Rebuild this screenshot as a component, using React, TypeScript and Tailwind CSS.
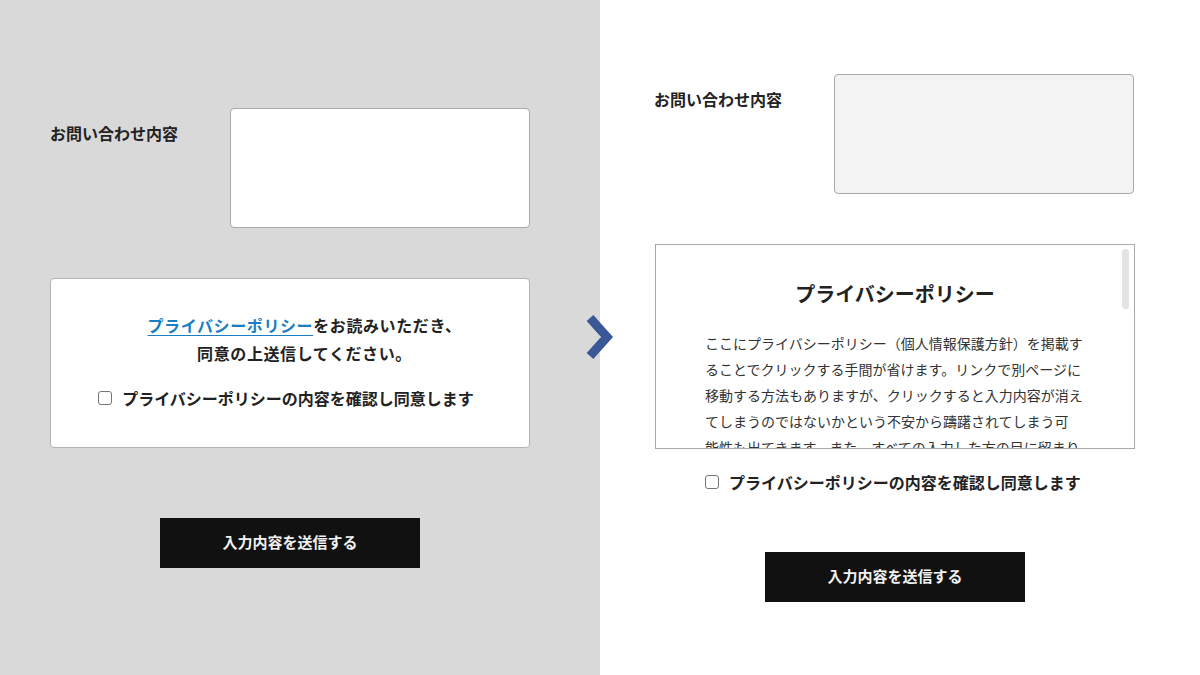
import React from "react";

const font = { fontFamily: '"Noto Sans CJK JP", "Noto Sans", sans-serif' };

// 表示される行の折り返しを参照に合わせて固定
const policyLines = [
  "ここにプライバシーポリシー（個人情報保護方針）を掲載す",
  "ることでクリックする手間が省けます。リンクで別ページに",
  "移動する方法もありますが、クリックすると入力内容が消え",
  "てしまうのではないかという不安から躊躇されてしまう可",
  "能性も出てきます。また、すべての入力した方の目に留まり",
  "やすくなるため、安心して送信していただくことができます。",
];

// お問い合わせ内容の行
function InquiryRow({ filled }: { filled?: boolean }) {
  return (
    <div className="flex">
      <label className="w-[180px] shrink-0 pt-[13px] text-[16px] leading-[24px] font-bold text-[#222]">
        お問い合わせ内容
      </label>
      <div
        className={`h-[120px] w-[300px] rounded-[4px] border border-[#a9a9a9] ${
          filled ? "bg-[#f3f3f3]" : "bg-white"
        }`}
      />
    </div>
  );
}

function AgreeCheck() {
  return (
    <label className="flex items-center gap-[10px] text-[16px] leading-[28px] font-bold text-[#222]">
      <input
        type="checkbox"
        className="m-0 h-[14px] w-[14px] shrink-0 appearance-none rounded-[3px] border border-[#767676] bg-white"
      />
      <span>プライバシーポリシーの内容を確認し同意します</span>
    </label>
  );
}

function SubmitButton() {
  return (
    <button
      type="button"
      className="flex h-[50px] w-[260px] items-center justify-center bg-[#111] text-[15px] font-bold text-[#f2f2f2]"
    >
      入力内容を送信する
    </button>
  );
}

export default function App() {
  return (
    <div className="relative flex h-[675px] w-[1200px] overflow-hidden" style={font}>
      {/* 左：リンク方式 */}
      <div className="flex h-full w-[600px] flex-col justify-center bg-[#d9d9d9] pl-[50px]">
        <div className="w-[480px]">
          <InquiryRow />
          <div className="mt-[50px] rounded-[4px] border border-[#b3b3b3] bg-white pt-[32px] pb-[35px]">
            <p className="pl-[29px] text-center text-[16px] leading-[28px] font-bold tracking-[0.6px] text-[#222]">
              <a className="text-[#1a7fc2] underline underline-offset-[3px]">プライバシーポリシー</a>
              をお読みいただき、
              <br />
              同意の上送信してください。
            </p>
            <div className="mt-[17px] flex justify-center pr-[8px]">
              <AgreeCheck />
            </div>
          </div>
          <div className="mt-[70px] flex justify-center">
            <SubmitButton />
          </div>
        </div>
      </div>

      {/* 右：埋め込み方式 */}
      <div className="flex h-full w-[600px] flex-col justify-center bg-white pl-[55px]">
        <div className="w-[480px]">
          <div className="-ml-px">
            <InquiryRow filled />
          </div>
          <div className="relative mt-[50px] h-[205px] overflow-hidden border border-[#a9a9a9] bg-white pt-[34px] pl-[49px]">
            <h2 className="pr-[49px] text-center text-[20px] leading-[30px] font-bold text-[#222]">
              プライバシーポリシー
            </h2>
            <p className="mt-[21px] text-[14px] leading-[26px] whitespace-nowrap text-[#333]">
              {policyLines.map((line) => (
                <span key={line} className="block">
                  {line}
                </span>
              ))}
            </p>
            <div className="absolute top-[4px] right-[5px] h-[60px] w-[7px] rounded-full bg-[#e3e3e3]" />
          </div>
          <div className="mt-[19px] pl-[50px]">
            <AgreeCheck />
          </div>
          <div className="mt-[56px] flex justify-center">
            <SubmitButton />
          </div>
        </div>
      </div>

      {/* 矢印 */}
      <svg
        className="absolute top-[310px] left-[580px]"
        width="40"
        height="55"
        viewBox="0 0 40 55"
      >
        <polyline
          points="10,8 27,27 10,46"
          fill="none"
          stroke="#3a5898"
          strokeWidth="9"
          strokeLinecap="butt"
          strokeLinejoin="miter"
        />
      </svg>
    </div>
  );
}
